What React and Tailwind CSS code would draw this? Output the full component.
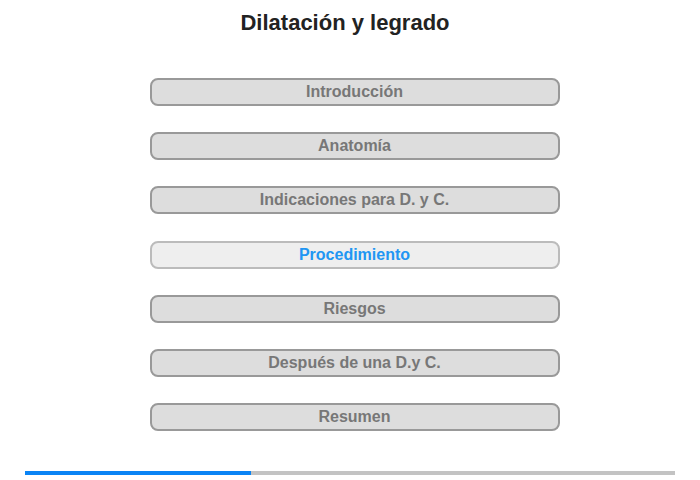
import React from 'react';

const sections = [
  'Introducción',
  'Anatomía',
  'Indicaciones para D. y C.',
  'Procedimiento',
  'Riesgos',
  'Después de una D.y C.',
  'Resumen',
];

export default function App() {
  const active = 3;

  return (
    <div className="w-[700px] h-[480px] bg-white font-['Liberation_Sans',Arial,sans-serif] flex flex-col items-center">
      <h1 className="mt-[10px] mr-[10px] text-[22px] leading-[26px] font-bold text-[#222]">Dilatación y legrado</h1>

      <div className="mt-[42px] ml-[9px] flex flex-col gap-[26.2px]">
        {sections.map((s, i) => (
          <div
            key={s}
            className={
              i === active
                ? 'w-[410px] h-[28px] rounded-[8px] border-2 border-[#bbb] bg-[#eee] flex items-center justify-center text-[16px] font-bold text-[#2196f3]'
                : 'w-[410px] h-[28px] rounded-[8px] border-2 border-[#999] bg-[#ddd] flex items-center justify-center text-[16px] font-bold text-[#777]'
            }
          >
            {s}
          </div>
        ))}
      </div>

      {/* progress bar */}
      <div className="mt-auto mb-[5px] w-[650px] h-[4px] bg-[#c3c3c3] flex">
        <div className="w-[226px] h-full bg-[#0a84f5]" />
      </div>
    </div>
  );
}
